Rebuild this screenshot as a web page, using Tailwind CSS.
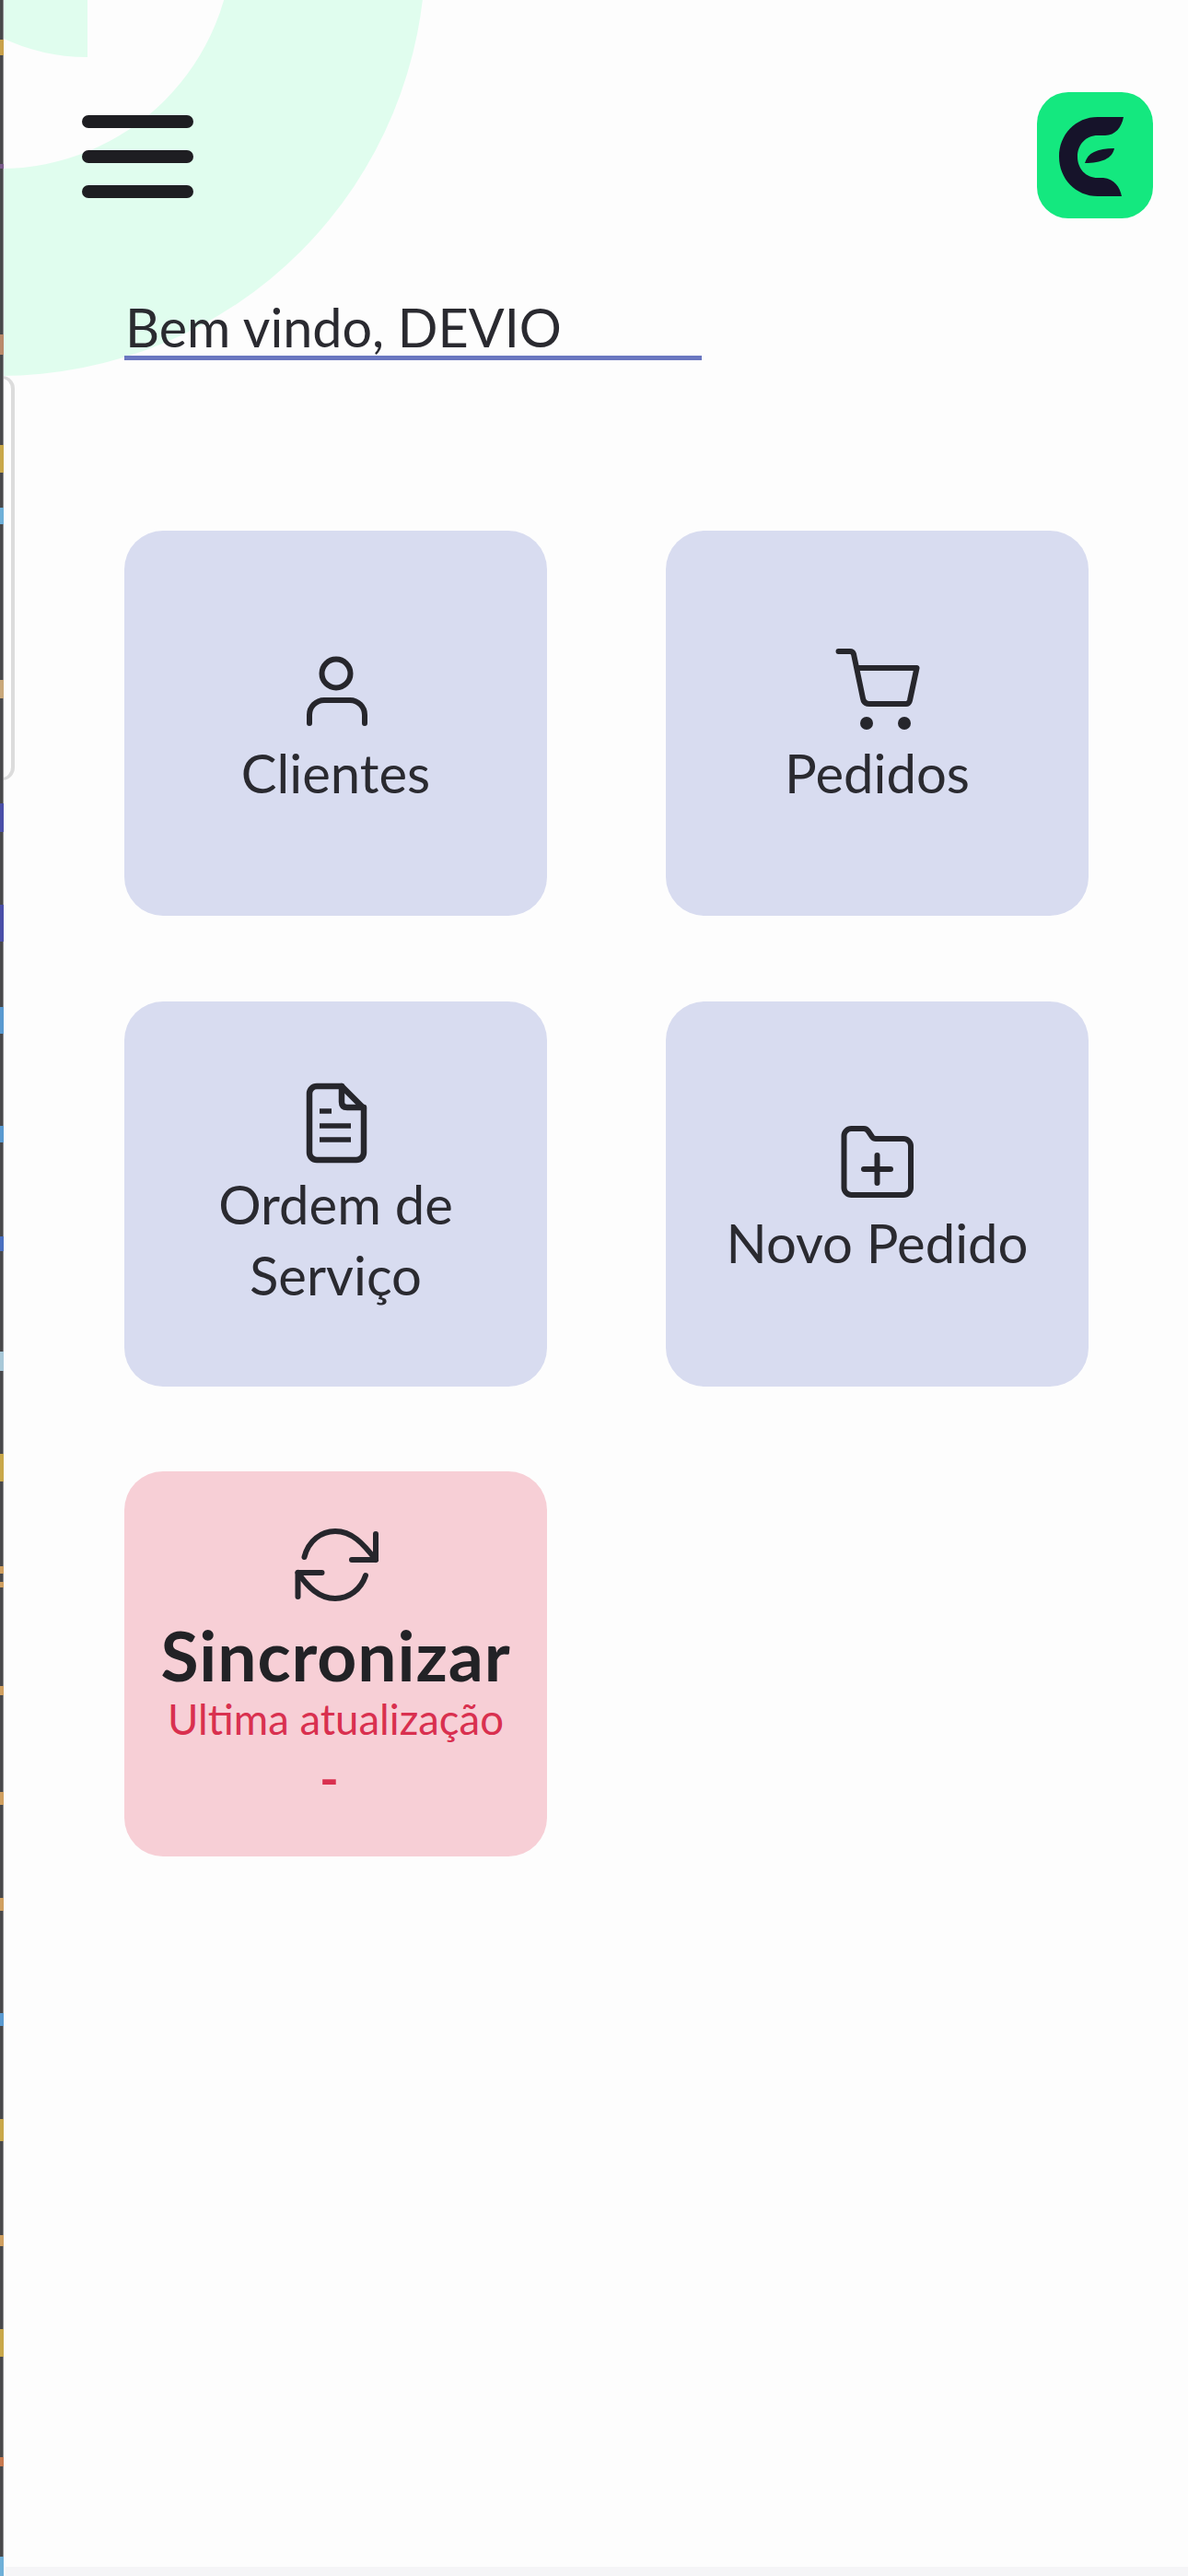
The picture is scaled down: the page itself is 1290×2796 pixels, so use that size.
<!DOCTYPE html>
<html lang="pt-BR">

<head>
  <meta charset="UTF-8" />
  <meta name="viewport" content="width=device-width, initial-scale=1.0" />
  <title>Home</title>
  <script src="https://cdn.jsdelivr.net/npm/@tailwindcss/browser@4"></script>
</head>

<body class="bg-[#fdfdfd] font-['Lato',sans-serif] text-[#2a2a30]">
  <div class="relative w-[1290px] h-[2796px] overflow-hidden">
    <!-- green shapes behind the header -->
    <svg class="absolute top-0 left-0" width="480" height="420" viewBox="0 0 480 420">
      <circle cx="0" cy="-54" r="462" fill="#e0fdee" />
      <circle cx="0" cy="-70" r="253" fill="#fdfdfd" />
      <path d="M0 40 Q45 62 95 62 V0 H0 Z" fill="#e0fdee" />
    </svg>

    <!-- window edge on the left, with the bits of the window behind it -->
    <div class="absolute top-[408px] left-0 w-[16px] h-[439px] border-r-[4px] border-y-[3px] border-[#dcdcdc] rounded-r-[14px]"></div>
    <div class="absolute top-0 left-0 bottom-0 w-[4px] bg-[#48484a] border-r border-[#8c8c8e]"></div>
    <div class="absolute left-0 w-[4px] top-[43px] h-[17px] bg-[#c9a14a]"></div>
    <div class="absolute left-0 w-[4px] top-[178px] h-[5px] bg-[#7a5a8a]"></div>
    <div class="absolute left-0 w-[4px] top-[363px] h-[22px] bg-[#b98a6a]"></div>
    <div class="absolute left-0 w-[4px] top-[483px] h-[30px] bg-[#c9a84a]"></div>
    <div class="absolute left-0 w-[4px] top-[551px] h-[18px] bg-[#6fb0d8]"></div>
    <div class="absolute left-0 w-[4px] top-[738px] h-[20px] bg-[#c9a87a]"></div>
    <div class="absolute left-0 w-[4px] top-[872px] h-[31px] bg-[#4a4fa8]"></div>
    <div class="absolute left-0 w-[4px] top-[982px] h-[40px] bg-[#4a4fa8]"></div>
    <div class="absolute left-0 w-[4px] top-[1093px] h-[29px] bg-[#5a9ad0]"></div>
    <div class="absolute left-0 w-[4px] top-[1222px] h-[18px] bg-[#5a9ad0]"></div>
    <div class="absolute left-0 w-[4px] top-[1342px] h-[16px] bg-[#4a70c0]"></div>
    <div class="absolute left-0 w-[4px] top-[1467px] h-[21px] bg-[#a8c8d8]"></div>
    <div class="absolute left-0 w-[4px] top-[1578px] h-[30px] bg-[#c9a84a]"></div>
    <div class="absolute left-0 w-[4px] top-[1700px] h-[8px] bg-[#d0a060]"></div>
    <div class="absolute left-0 w-[4px] top-[1717px] h-[6px] bg-[#d0a060]"></div>
    <div class="absolute left-0 w-[4px] top-[1830px] h-[10px] bg-[#d0a060]"></div>
    <div class="absolute left-0 w-[4px] top-[1945px] h-[14px] bg-[#d0a060]"></div>
    <div class="absolute left-0 w-[4px] top-[2060px] h-[14px] bg-[#d0a060]"></div>
    <div class="absolute left-0 w-[4px] top-[2185px] h-[14px] bg-[#5a9ad0]"></div>
    <div class="absolute left-0 w-[4px] top-[2300px] h-[24px] bg-[#c9a84a]"></div>
    <div class="absolute left-0 w-[4px] top-[2426px] h-[12px] bg-[#d0a060]"></div>
    <div class="absolute left-0 w-[4px] top-[2528px] h-[30px] bg-[#c9a84a]"></div>
    <div class="absolute left-0 w-[4px] top-[2667px] h-[10px] bg-[#c87a50]"></div>
    <div class="absolute left-0 w-[4px] top-[2775px] h-[21px] bg-[#6fb0d8]"></div>

    <div class="relative">
      <div class="flex justify-between items-start pl-[89px] pr-[38px] pt-[100px]">
        <button class="flex flex-col gap-[24px] w-[121px] pt-[25px]">
          <span class="block h-[14px] rounded-full bg-[#1e1e22]"></span>
          <span class="block h-[14px] rounded-full bg-[#1e1e22]"></span>
          <span class="block h-[14px] rounded-full bg-[#1e1e22]"></span>
        </button>
        <div class="w-[126px] h-[137px] rounded-[34px] bg-[#14e87f]">
          <svg width="126" height="137" viewBox="0 0 126 137">
            <path d="M94 27 H66 C42 27 24 46 24 70 C24 94 42 113 66 113 H92 C90 103 84 94 72 93 H66 C53 93 44 83 44 70 C44 57 53 47 66 47 H74 C85 47 92 38 94 27 Z" fill="#16132a" />
            <path d="M52 77 C55 66 65 61 84 61 C82 72 70 77 52 77 Z" fill="#16132a" />
          </svg>
        </div>
      </div>

      <div class="ml-[135px] mt-[80px] w-[627px] border-b-[5px] border-[#6a77c0] pl-[1px] pt-[5px] text-[57.5px] leading-[65px] h-[74px]">Bem vindo, DEVIO</div>

      <div class="grid grid-cols-[459px_459px] gap-x-[129px] gap-y-[92.5px] ml-[135px] mt-[185px]">
        <a class="h-[418px] rounded-[42px] bg-[#d8dcf0] flex flex-col items-center justify-center text-center text-[58px] leading-[77px]">
          <svg width="106" height="106" viewBox="0 0 106 106" fill="none" stroke="#26262c" stroke-width="6" stroke-linecap="round">
            <circle cx="53" cy="37" r="15.5" />
            <path d="M24 91 V82 A16 16 0 0 1 40 66 H68 A16 16 0 0 1 84 82 V91" />
          </svg>
          <span>Clientes</span>
        </a>
        <a class="h-[418px] rounded-[42px] bg-[#d8dcf0] flex flex-col items-center justify-center text-center text-[58px] leading-[77px]">
          <svg width="106" height="106" viewBox="0 0 106 106" fill="none" stroke="#26262c" stroke-width="6" stroke-linecap="round" stroke-linejoin="round">
            <path d="M10.5 13 H23 Q26 13 27 16 L37 64 Q38 70 44 70 H84 Q87 70 88 66 L95.5 31 H32" />
            <circle cx="41" cy="91" r="7" fill="#26262c" stroke="none" />
            <circle cx="82" cy="91" r="7" fill="#26262c" stroke="none" />
          </svg>
          <span>Pedidos</span>
        </a>
        <a class="h-[418px] rounded-[42px] bg-[#d8dcf0] flex flex-col items-center justify-center text-center text-[58px] leading-[77px]">
          <svg width="106" height="99" viewBox="0 0 106 99" fill="none" stroke="#26262c" stroke-width="6.5" stroke-linecap="round" stroke-linejoin="round">
            <path d="M32 10 H59 L83 34 V82 A8 8 0 0 1 75 90 H32 A8 8 0 0 1 24 82 V18 A8 8 0 0 1 32 10 Z" />
            <path d="M59 10 V27 Q59 33 65 33 H83" />
            <path d="M35 37 H48 M35 53 H69 M35 68 H69" stroke-width="5.5" stroke-linecap="butt" />
          </svg>
          <span class="w-[340px]">Ordem de Serviço</span>
        </a>
        <a class="h-[418px] rounded-[42px] bg-[#d8dcf0] flex flex-col items-center justify-center text-center text-[58px] leading-[77px]">
          <svg width="106" height="106" viewBox="0 0 106 106" fill="none" stroke="#26262c" stroke-width="6" stroke-linecap="round" stroke-linejoin="round">
            <path d="M24.5 21 H38 Q41 21 43 24 L47 30 Q48.5 32 51 32 H81 A8 8 0 0 1 89 40 V85 A8 8 0 0 1 81 93 H24.5 A8 8 0 0 1 16.5 85 V29 A8 8 0 0 1 24.5 21 Z" />
            <path d="M38 65 H67 M52.5 50 V80" stroke-width="6" />
          </svg>
          <span>Novo Pedido</span>
        </a>
        <a class="h-[418px] rounded-[42px] bg-[#f7cfd6] flex flex-col items-center justify-center text-center">
          <svg width="106" height="100" viewBox="0 0 106 100" fill="none" stroke="#26262c" stroke-width="6" stroke-linecap="round" stroke-linejoin="round">
            <path d="M18.5 40 C23 22 37 12 52 12 C70 12 82 25 96 43" />
            <path d="M96 15 V43 H70" />
            <path d="M85 60 C80 75 67 85 52 85 C34 85 22 72 11.5 57" />
            <path d="M11.5 83 V57 H37.5" />
          </svg>
          <span class="pt-[8px] text-[75px] leading-[76px] font-bold tracking-[0.9px] text-[#222226]">Sincronizar</span>
          <span class="text-[45.5px] leading-[64px] text-[#d9304f]">Ultima atualização</span>
          <span class="text-[56px] leading-[64px] font-bold text-[#d9304f] pr-[14px]">-</span>
        </a>
      </div>
    </div>

    <div class="absolute left-[6px] right-0 bottom-0 h-[10px] bg-[#f5f5f7]"></div>
  </div>
</body>

</html>
